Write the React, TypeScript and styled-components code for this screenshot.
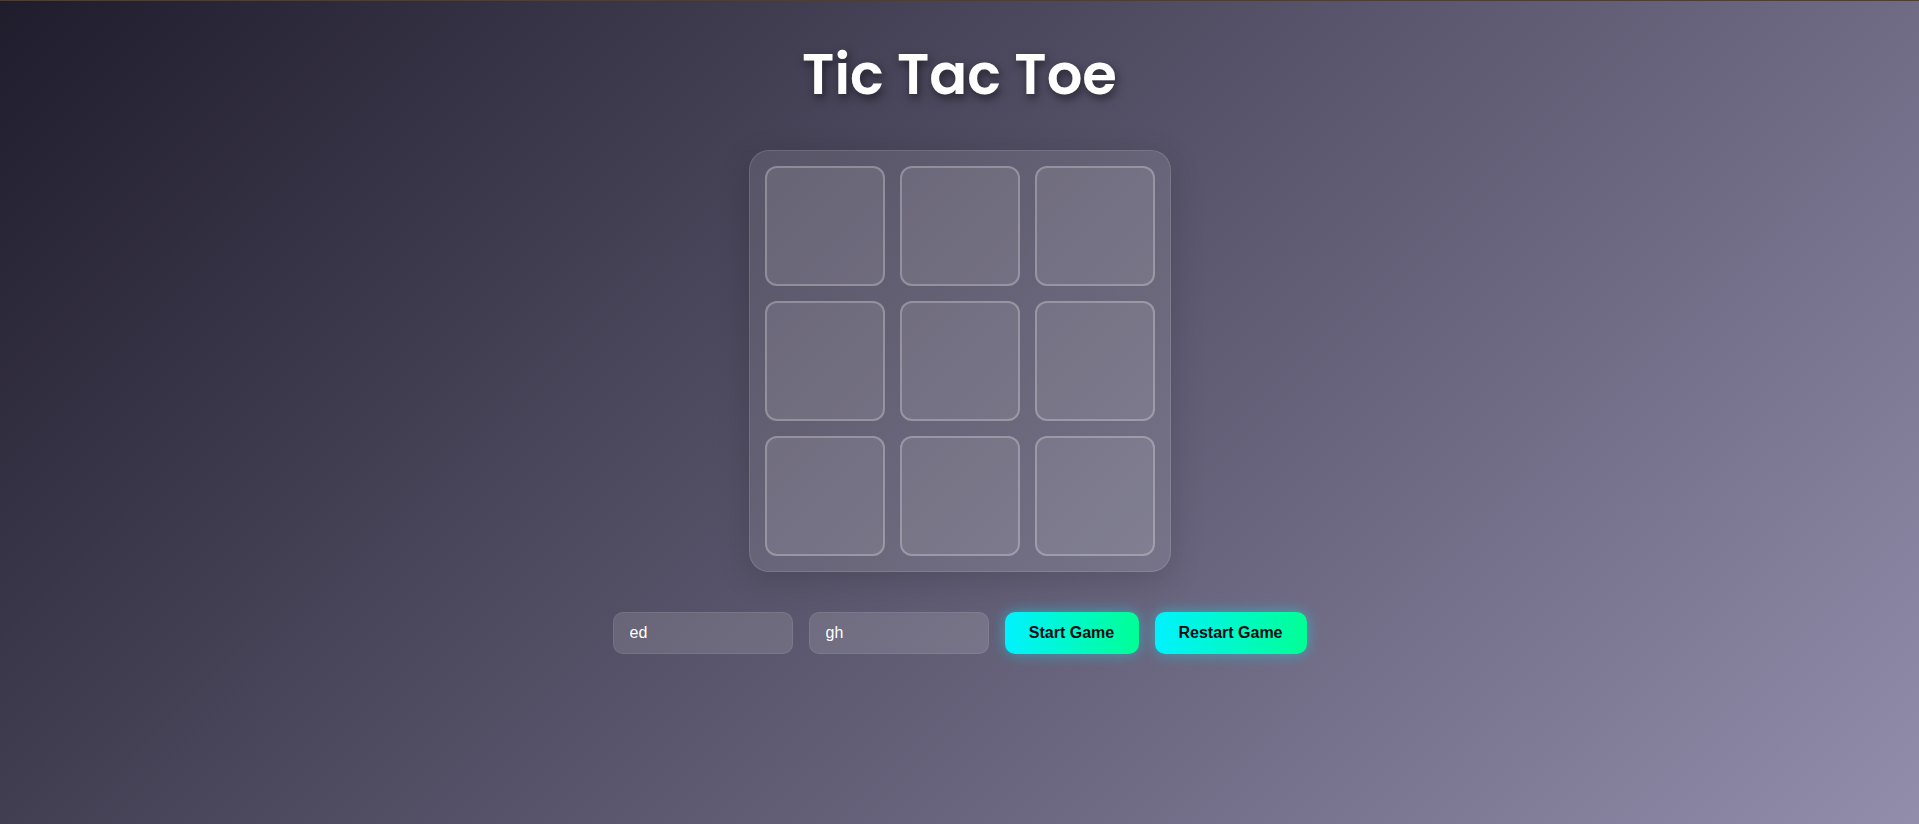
import React from "react";
import styled, { createGlobalStyle } from "styled-components";

const GlobalStyle = createGlobalStyle`
  html, body {
    margin: 0;
    padding: 0;
    height: 100%;
  }
  body {
    min-height: 824px;
    background: linear-gradient(135deg, #1f1c2c 0%, #928dab 100%);
    background-attachment: fixed;
    font-family: "Liberation Sans", Arial, sans-serif;
    color: #fff;
  }
`;

const Page = styled.div`
  min-height: 823px;
  border-top: 1px solid #4d3e36;
  display: flex;
  flex-direction: column;
  align-items: center;
`;

const Title = styled.h1`
  margin: 34px 0 0;
  font-family: "Poppins", Inter, "Noto Sans", sans-serif;
  font-weight: 600;
  font-size: 56px;
  line-height: 80px;
  color: #ffffff;
  text-shadow: 2px 4px 8px rgba(0, 0, 0, 0.5);
`;

const Board = styled.div`
  margin-top: 35px;
  display: grid;
  grid-template-columns: repeat(3, 120px);
  grid-template-rows: repeat(3, 120px);
  gap: 15px;
  padding: 15px;
  background: rgba(255, 255, 255, 0.1);
  border: 1px solid rgba(255, 255, 255, 0.12);
  border-radius: 20px;
  box-shadow: 0 8px 32px rgba(0, 0, 0, 0.15);
`;

const Cell = styled.button`
  all: unset;
  box-sizing: border-box;
  width: 120px;
  height: 120px;
  background: rgba(255, 255, 255, 0.09);
  border: 2px solid rgba(255, 255, 255, 0.25);
  border-radius: 12px;
  cursor: pointer;
`;

const Controls = styled.div`
  margin-top: 40px;
  display: flex;
  gap: 16px;
  align-items: center;
`;

const NameInput = styled.input`
  box-sizing: border-box;
  width: 180px;
  height: 42px;
  padding: 0 16px;
  background: rgba(255, 255, 255, 0.13);
  border: 1px solid rgba(255, 255, 255, 0.08);
  border-radius: 10px;
  color: #ffffff;
  font-family: "Liberation Sans", Arial, sans-serif;
  font-size: 16px;
  outline: none;
`;

const ActionButton = styled.button<{ $width: number }>`
  box-sizing: border-box;
  width: ${(p) => p.$width}px;
  height: 42px;
  border: none;
  border-radius: 10px;
  background: linear-gradient(90deg, #00f2fe 0%, #00ff95 100%);
  box-shadow: 0 0 14px rgba(0, 242, 254, 0.45);
  color: #0a0a14;
  font-family: "Liberation Sans", Arial, sans-serif;
  font-weight: 700;
  font-size: 16px;
  cursor: pointer;
`;

export default function App() {
  return (
    <>
      <GlobalStyle />
      <Page>
        <Title>Tic Tac Toe</Title>
        <Board>
          {Array.from({ length: 9 }).map((_, i) => (
            <Cell key={i} aria-label={`cell ${i + 1}`} />
          ))}
        </Board>
        <Controls>
          <NameInput defaultValue="ed" />
          <NameInput defaultValue="gh" />
          <ActionButton $width={134}>Start Game</ActionButton>
          <ActionButton $width={152}>Restart Game</ActionButton>
        </Controls>
      </Page>
    </>
  );
}
